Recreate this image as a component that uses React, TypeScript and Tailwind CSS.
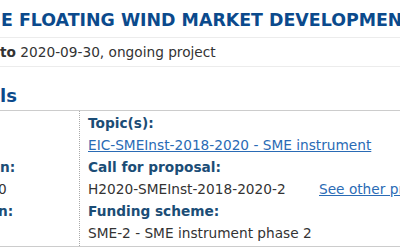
import React from "react";

const font = { fontFamily: '"DejaVu Sans", Verdana, sans-serif' };

export default function App() {
  return (
    <div className="w-[400px] h-[250px] overflow-hidden bg-white text-[#333]" style={font}>
      <div className="h-[37px] pt-[10px] pl-px whitespace-nowrap text-[17.4px] font-bold leading-[20px] text-[#0b4a8c]">
        E FLOATING WIND MARKET DEVELOPMENT
      </div>
      <div className="h-[30px] border-y border-[#ececec] flex items-center whitespace-nowrap text-[13.7px] leading-[16px]">
        <span className="font-bold">to</span>&nbsp;2020-09-30, ongoing project
      </div>
      <div className="h-[43px] pt-[19px] whitespace-nowrap text-[18px] font-bold leading-[20px] text-[#0b4a8c]">
        ls
      </div>
      <div className="border-y border-[#cccccc] flex h-[137px] text-[13.7px] leading-[22px]">
        <div className="w-[80px] shrink-0 border-r border-dotted border-[#aaaaaa] pt-[1px] overflow-hidden whitespace-nowrap">
          <div className="h-[22px]"></div>
          <div className="h-[22px]"></div>
          <div className="h-[22px] font-bold text-[#1b4d76]">n:</div>
          <div className="h-[22px] -ml-[2px]">0</div>
          <div className="h-[22px] font-bold text-[#1b4d76] -ml-[2px]">n:</div>
          <div className="h-[22px]"></div>
        </div>
        <div className="flex-1 min-w-0 pl-[8px] pt-[1px] whitespace-nowrap overflow-hidden">
          <div className="h-[22px] font-bold text-[#1b4d76]">Topic(s):</div>
          <div className="h-[22px]">
            <a className="text-[#2a6bb5] underline">EIC-SMEInst-2018-2020 - SME instrument</a>
          </div>
          <div className="h-[22px] font-bold text-[#1b4d76]">Call for proposal:</div>
          <div className="h-[22px] flex">
            <span className="w-[231px] shrink-0">H2020-SMEInst-2018-2020-2</span>
            <a className="text-[#2a6bb5] underline">See other projects for this call</a>
          </div>
          <div className="h-[22px] font-bold text-[#1b4d76]">Funding scheme:</div>
          <div className="h-[22px]">SME-2 - SME instrument phase 2</div>
        </div>
      </div>
    </div>
  );
}
